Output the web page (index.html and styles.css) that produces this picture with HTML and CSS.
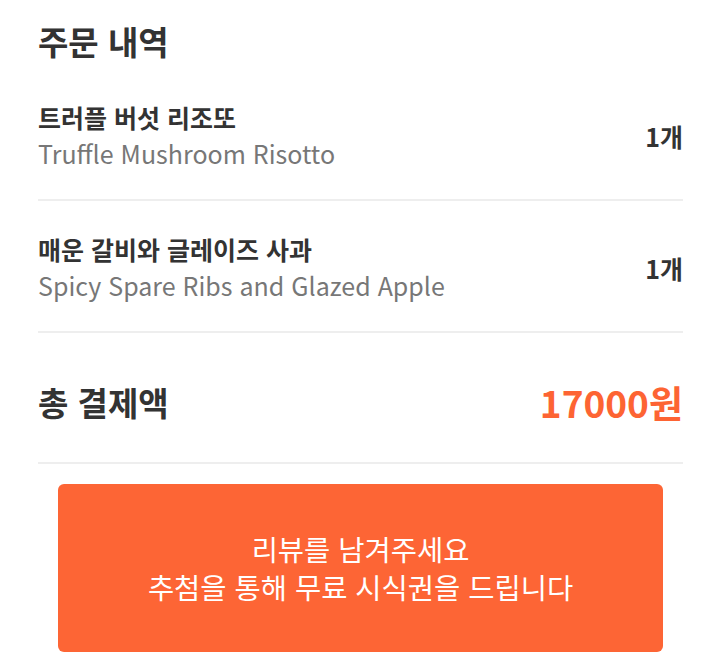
FILE: index.html
```html
<!DOCTYPE html>
<html lang="ko">
<head>
  <meta charset="UTF-8" />
  <title>주문 내역</title>
  <meta name="viewport" content="width=device-width, initial-scale=1.0" />
  <link rel="stylesheet" href="styles.css">
</head>
<body>
  <div class="order">
    <h1 class="order-title">주문 내역</h1>

    <!-- Items -->
    <div class="order-item">
      <div class="item-names">
        <div class="item-ko">트러플 버섯 리조또</div>
        <div class="item-en">Truffle Mushroom Risotto</div>
      </div>
      <div class="item-qty">1개</div>
    </div>

    <div class="order-item">
      <div class="item-names">
        <div class="item-ko">매운 갈비와 글레이즈 사과</div>
        <div class="item-en">Spicy Spare Ribs and Glazed Apple</div>
      </div>
      <div class="item-qty">1개</div>
    </div>

    <!-- Total -->
    <div class="order-total">
      <div class="total-label">총 결제액</div>
      <div class="total-price">17000원</div>
    </div>

    <button class="review-btn">리뷰를 남겨주세요<br>추첨을 통해 무료 시식권을 드립니다</button>
  </div>
</body>
</html>
```

FILE: styles.css
```css
body {
  margin: 0;
  background-color: #fff;
  color: #333;
  font-family: "Noto Sans CJK KR", "Noto Sans", sans-serif;
}

.order {
  padding: 12px 37px 0 38px;
  display: flex;
  flex-direction: column;
}

.order-title {
  margin: 0;
  font-size: 33px;
  font-weight: bold;
  line-height: 58px;
  color: #333;
}

.order-item {
  display: flex;
  justify-content: space-between;
  align-items: center;
  padding: 30px 0 27px;
  border-bottom: 2px solid #eee;
}

.order-item + .order-item {
  padding-top: 31px;
}

.item-ko {
  font-size: 25px;
  font-weight: bold;
  line-height: 34px;
}

.item-en {
  font-size: 25px;
  line-height: 38px;
  color: #777;
}

.item-qty {
  font-size: 25px;
  font-weight: bold;
}

.order-total {
  display: flex;
  justify-content: space-between;
  align-items: center;
  padding: 42px 0 33px;
  border-bottom: 2px solid #eee;
}

.total-label {
  font-size: 33px;
  font-weight: bold;
  line-height: 52px;
}

.total-price {
  font-size: 37px;
  font-weight: bold;
  color: #fd6433;
}

.review-btn {
  margin: 20px 20px 0;
  height: 168px;
  border: none;
  border-radius: 6px;
  background-color: #fd6535;
  color: white;
  font-family: "Noto Sans CJK KR", sans-serif;
  font-size: 28.5px;
  line-height: 38px;
}
```
